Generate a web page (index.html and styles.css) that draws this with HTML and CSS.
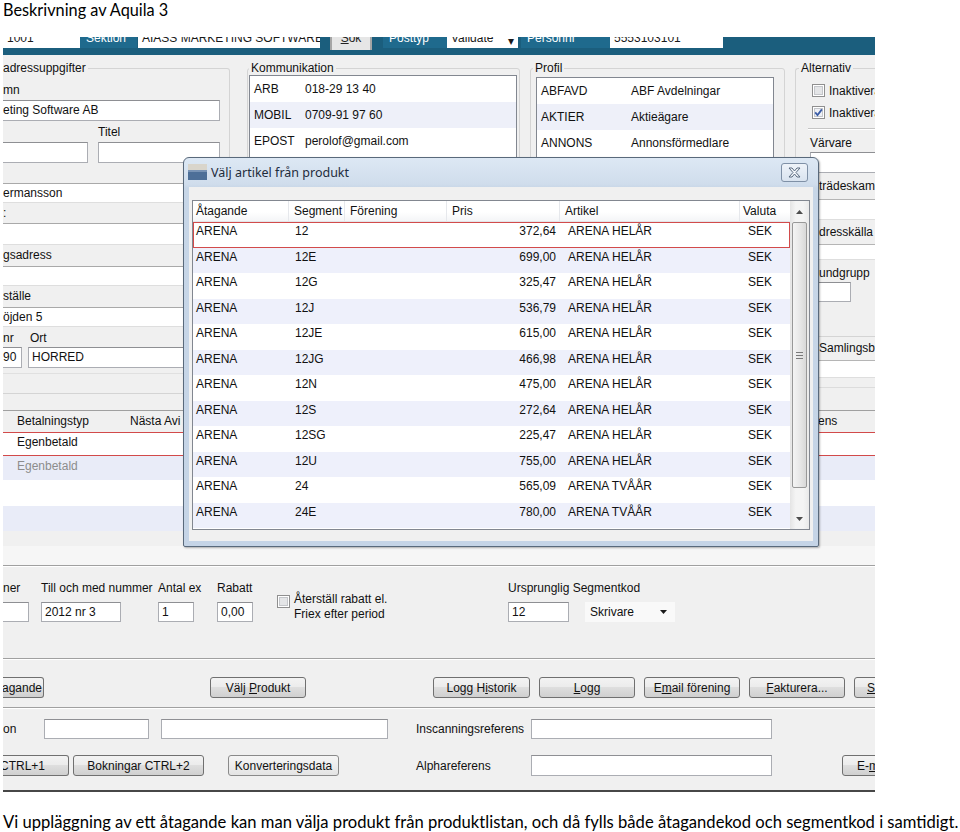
FILE: index.html
```html
<!DOCTYPE html>
<html lang="sv">
<head>
<meta charset="utf-8">
<title>Beskrivning av Aquila 3</title>
<link rel="stylesheet" href="styles.css">
</head>
<body>
<h1 class="doc-title">Beskrivning av Aquila 3</h1>

<div class="app">
  <div class="topbar">
    <div class="tb-field tb-f1"><span>1001</span></div>
    <div class="tb-label tb-l1"><span>Sektion</span></div>
    <div class="tb-field tb-f2"><span>AIASS MARKETING SOFTWARE</span></div>
    <div class="tb-btn"><span><u>S</u>ök</span></div>
    <div class="tb-label tb-l2"><span>Posttyp</span></div>
    <div class="tb-field tb-f3"><span>Validate</span><b class="tb-drop">&#9662;</b></div>
    <div class="tb-label tb-l3"><span>Personnr</span></div>
    <div class="tb-field tb-f4"><span>5553103101</span></div>
  </div>

  <div class="panel">
    <section class="sec-top">
      <div class="group g-left">
        <div class="legend">adressuppgifter</div>
        <div class="lbl lbl-name">mn</div>
        <div class="inp inp-name">eting Software AB</div>
        <div class="pair">
          <div class="pcol pcol-a"><div class="lbl lbl-pair"></div><div class="inp inp-a"></div></div>
          <div class="pcol"><div class="lbl lbl-pair">Titel</div><div class="inp inp-b"></div></div>
        </div>
        <div class="strip h20"></div>
        <div class="strip fld h20">ermansson</div>
        <div class="strip h20">:</div>
        <div class="strip fld h22"></div>
        <div class="strip h21">gsadress</div>
        <div class="strip fld h20"></div>
        <div class="strip h21">ställe</div>
        <div class="strip fld h20">öjden 5</div>
        <div class="pair pair-ort">
          <div class="pcol pcol-nr"><div class="lbl lbl-ort">nr</div><div class="inp inp-nr">90</div></div>
          <div class="pcol"><div class="lbl lbl-ort lbl-ort2">Ort</div><div class="inp inp-ort">HORRED</div></div>
        </div>
        <div class="faint"></div>
      </div>

      <div class="group g-komm">
        <div class="legend">Kommunikation</div>
        <div class="lb lb-komm">
          <div class="lb-row"><span class="k1">ARB</span><span>018-29 13 40</span></div>
          <div class="lb-row alt"><span class="k1">MOBIL</span><span>0709-91 97 60</span></div>
          <div class="lb-row"><span class="k1">EPOST</span><span>perolof@gmail.com</span></div>
        </div>
      </div>

      <div class="group g-prof">
        <div class="legend">Profil</div>
        <div class="lb lb-prof">
          <div class="lb-row"><span class="p1">ABFAVD</span><span>ABF Avdelningar</span></div>
          <div class="lb-row alt"><span class="p1">AKTIER</span><span>Aktieägare</span></div>
          <div class="lb-row"><span class="p1">ANNONS</span><span>Annonsförmedlare</span></div>
        </div>
      </div>

      <div class="col-right">
        <div class="group g-alt">
          <div class="legend">Alternativ</div>
          <div class="cb-row">
            <svg class="cb" width="13" height="13" viewBox="0 0 13 13"><rect x=".5" y=".5" width="12" height="12" fill="#fff" stroke="#8f8f8f"/><rect x="2.5" y="2.5" width="8" height="8" fill="#e4e5e7" stroke="#c4c6ca"/></svg>
            <span>Inaktivera</span>
          </div>
          <div class="cb-row">
            <svg class="cb" width="13" height="13" viewBox="0 0 13 13"><rect x=".5" y=".5" width="12" height="12" fill="#fff" stroke="#8f8f8f"/><rect x="2.5" y="2.5" width="8" height="8" fill="#eef0f5" stroke="#c4c6ca"/><path d="M3.2 6.4l2.3 2.6 4.4-5.6" fill="none" stroke="#3a5ca6" stroke-width="1.8"/></svg>
            <span>Inaktivera</span>
          </div>
          <div class="sep"></div>
          <div class="lbl lbl-varv">Värvare</div>
          <div class="inp inp-varv"></div>
          <div class="rs rs-lab h26">trädeskampanj</div>
          <div class="rs rs-fld h21"></div>
          <div class="rs rs-lab h24">dresskälla</div>
          <div class="rs rs-fld h16"></div>
          <div class="rs rs-lab rs-kund">undgrupp</div>
          <div class="inp rs-inp"></div>
          <div class="rs-space"></div>
        </div>
        <div class="rs rs-lab2">Samlingsbetalning</div>
        <div class="rs rs-fld h18"></div>
        <div class="rs rs-end"></div>
      </div>
    </section>

    <section class="sec-list">
      <div class="bl">
        <div class="bl-row bl-head"><span class="c1">Betalningstyp</span><span>Nästa Avi</span><span>ens</span></div>
        <div class="bl-row sel"><span class="c1">Egenbetald</span></div>
        <div class="bl-row alt dim"><span class="c1">Egenbetald</span></div>
        <div class="bl-row r3"></div>
        <div class="bl-row alt r4"></div>
      </div>
      <div class="bl-gap"></div>
      <div class="bl-light"></div>
    </section>

    <section class="sec-c">
      <div class="etch"></div>
      <div class="fields">
        <div class="fc fc1"><div class="lbl">ner</div><div class="inp in1"></div></div>
        <div class="fc fc2"><div class="lbl">Till och med nummer</div><div class="inp in2">2012 nr 3</div></div>
        <div class="fc fc3"><div class="lbl">Antal ex</div><div class="inp in3">1</div></div>
        <div class="fc fc4"><div class="lbl">Rabatt</div><div class="inp in4">0,00</div></div>
        <div class="fc fc5">
          <svg class="cb cb-reset" width="13" height="13" viewBox="0 0 13 13"><rect x=".5" y=".5" width="12" height="12" fill="#fff" stroke="#8f8f8f"/><rect x="2.5" y="2.5" width="8" height="8" fill="#e4e5e7" stroke="#c4c6ca"/></svg>
          <div class="reset-text">Återställ rabatt el.<br>Friex efter period</div>
        </div>
        <div class="fc fc6">
          <div class="lbl">Ursprunglig Segmentkod</div>
          <div class="seg-row">
            <div class="inp in6">12</div>
            <div class="combo"><span>Skrivare</span><svg class="combo-arrow" width="7" height="4" viewBox="0 0 7 4"><path d="M0 0h7L3.5 4z" fill="#1a1a1a"/></svg></div>
          </div>
        </div>
      </div>
    </section>

    <section class="sec-d">
      <div class="etch"></div>
      <div class="btnrow">
        <div class="btn b-cut b1"><span>agande</span></div>
        <div class="btn b2"><span>Välj <u>P</u>rodukt</span></div>
        <div class="btn b3"><span>Logg H<u>i</u>storik</span></div>
        <div class="btn b4"><span><u>L</u>ogg</span></div>
        <div class="btn b4"><span>E<u>m</u>ail förening</span></div>
        <div class="btn b4"><span><u>F</u>akturera...</span></div>
        <div class="btn b7"><span><u>S</u>kriv ut</span></div>
      </div>
    </section>

    <section class="sec-e">
      <div class="etch"></div>
      <div class="erow erow1">
        <div class="elbl el-on">on</div>
        <div class="inp ei1"></div>
        <div class="inp ei2"></div>
        <div class="elbl el-ref">Inscanningsreferens</div>
        <div class="inp ei3"></div>
      </div>
      <div class="erow erow2">
        <div class="btn b-cut e1"><span>CTRL+1</span></div>
        <div class="btn e2"><span>Bokningar CTRL+2</span></div>
        <div class="btn btn-flat e3"><span>Konverteringsdata</span></div>
        <div class="elbl el-alpha">Alphareferens</div>
        <div class="inp ei3 ei4"></div>
        <div class="btn e5"><span>E-<u>m</u>ail</span></div>
      </div>
    </section>
  </div>

  <div class="dlg">
    <div class="dlg-title">
      <svg class="dlg-icon" width="19" height="17" viewBox="0 0 19 17"><rect x="0" y="0" width="19" height="6" fill="#d9d5cb"/><rect x="0" y="6" width="19" height="10" fill="#4d6f98"/><rect x="0" y="6" width="19" height="2" fill="#7893b5"/></svg>
      <span class="dlg-caption">Välj artikel från produkt</span>
      <div class="dlg-close"><svg width="13" height="11" viewBox="0 0 13 11"><path d="M1 1h3l2.5 3 2.5-3h3l-4 4.5 4 4.5h-3l-2.5-3-2.5 3h-3l4-4.5z" fill="#f4f7fb" stroke="#5a6b80" stroke-width="1" stroke-linejoin="round"/></svg></div>
    </div>
    <div class="dlg-client">
      <div class="lv">
        <div class="lv-main">
          <div class="lv-head"><span>Åtagande</span><span>Segment</span><span>Förening</span><span>Pris</span><span>Artikel</span><span>Valuta</span></div>
          <div class="lv-row sel"><span>ARENA</span><span>12</span><span></span><span>372,64</span><span>ARENA HELÅR</span><span>SEK</span></div>
          <div class="lv-row"><span>ARENA</span><span>12E</span><span></span><span>699,00</span><span>ARENA HELÅR</span><span>SEK</span></div>
          <div class="lv-row"><span>ARENA</span><span>12G</span><span></span><span>325,47</span><span>ARENA HELÅR</span><span>SEK</span></div>
          <div class="lv-row"><span>ARENA</span><span>12J</span><span></span><span>536,79</span><span>ARENA HELÅR</span><span>SEK</span></div>
          <div class="lv-row"><span>ARENA</span><span>12JE</span><span></span><span>615,00</span><span>ARENA HELÅR</span><span>SEK</span></div>
          <div class="lv-row"><span>ARENA</span><span>12JG</span><span></span><span>466,98</span><span>ARENA HELÅR</span><span>SEK</span></div>
          <div class="lv-row"><span>ARENA</span><span>12N</span><span></span><span>475,00</span><span>ARENA HELÅR</span><span>SEK</span></div>
          <div class="lv-row"><span>ARENA</span><span>12S</span><span></span><span>272,64</span><span>ARENA HELÅR</span><span>SEK</span></div>
          <div class="lv-row"><span>ARENA</span><span>12SG</span><span></span><span>225,47</span><span>ARENA HELÅR</span><span>SEK</span></div>
          <div class="lv-row"><span>ARENA</span><span>12U</span><span></span><span>755,00</span><span>ARENA HELÅR</span><span>SEK</span></div>
          <div class="lv-row"><span>ARENA</span><span>24</span><span></span><span>565,09</span><span>ARENA TVÅÅR</span><span>SEK</span></div>
          <div class="lv-row"><span>ARENA</span><span>24E</span><span></span><span>780,00</span><span>ARENA TVÅÅR</span><span>SEK</span></div>
        </div>
        <div class="sb">
          <div class="sb-btn"><svg width="7" height="4" viewBox="0 0 7 4"><path d="M0 4L3.5 0 7 4z" fill="#4d4d4d"/></svg></div>
          <div class="sb-thumb"><svg width="7" height="7" viewBox="0 0 7 7"><path d="M0 .5h7M0 3.5h7M0 6.5h7" stroke="#7a7a7a" stroke-width="1"/></svg></div>
          <div class="sb-track"></div>
          <div class="sb-btn"><svg width="7" height="4" viewBox="0 0 7 4"><path d="M0 0h7L3.5 4z" fill="#4d4d4d"/></svg></div>
        </div>
      </div>
    </div>
  </div>
</div>

<p class="caption">Vi uppläggning av ett åtagande kan man välja produkt från produktlistan, och då fylls både åtagandekod och segmentkod i samtidigt.</p>
</body>
</html>
```

FILE: styles.css
```css
* { box-sizing: border-box; }
html, body { margin: 0; padding: 0; }
body {
  background: #fff;
  width: 960px;
  height: 832px;
  overflow: hidden;
  font-family: "Liberation Sans", Arial, sans-serif;
}

.doc-title {
  margin: 0;
  padding: 0 0 0 3px;
  height: 20px;
  font: 400 16.3px/20px Lato, "Open Sans", sans-serif;
  color: #000;
}
.caption {
  margin: 20px 0 0 3px;
  font: 400 16.6px/20px Lato, "Open Sans", sans-serif;
  white-space: nowrap;
  color: #000;
}

.app {
  position: relative;
  margin: 17px 0 0 3px;
  width: 872px;
  height: 755px;
  overflow: hidden;
  font-size: 12px;
  line-height: 14px;
  color: #111;
}
u { text-decoration: underline; }

/* ---------- top bar ---------- */
.topbar {
  display: flex;
  align-items: flex-start;
  height: 18px;
  background: #1b5e7d;
}
.tb-field, .tb-label, .tb-btn {
  flex: none;
  height: 11px;
  display: flex;
  align-items: flex-end;
  overflow: hidden;
  white-space: nowrap;
}
.tb-field span, .tb-label span, .tb-btn span { line-height: 20px; }
.tb-field { background: #fff; color: #1a1a1a; padding-left: 4px; }
.tb-label { background: #1f6a8d; color: #fff; padding-left: 6px; }
.tb-btn {
  width: 42px;
  height: 13px;
  margin-left: 10px;
  justify-content: center;
  background: #e6e6e6;
  border-left: 2px solid #a5a5a5;
  border-right: 2px solid #a5a5a5;
  color: #222;
}
.tb-btn span { line-height: 24px; }
.tb-f1 { width: 77px; }
.tb-l1 { width: 57px; }
.tb-f2 { width: 182px; margin-left: 1px; }
.tb-l2 { width: 64px; margin-left: 11px; }
.tb-f3 { width: 71px; }
.tb-drop { margin-left: auto; margin-right: 4px; font-weight: 400; line-height: 14px; }
.tb-l3 { width: 89px; margin-left: 3px; }
.tb-f4 { width: 113px; }

/* ---------- panel ---------- */
.panel {
  height: 737px;
  background: #f0f0f0;
  border-bottom: 2px solid #474747;
}

.sec-top {
  height: 350px;
  display: flex;
  align-items: flex-start;
  padding-top: 13px;
}
.group {
  flex: none;
  border: 1px solid #d4d4d4;
  border-radius: 3px;
}
.legend {
  width: max-content;
  height: 14px;
  line-height: 14px;
  margin-top: -8px;
  padding: 0 2px;
  background: #f0f0f0;
  white-space: nowrap;
}

.lbl { height: 16px; line-height: 16px; white-space: nowrap; }
.inp {
  height: 21px;
  line-height: 19px;
  background: #fff;
  border: 1px solid #abadb3;
  border-top-color: #8e8f93;
  padding-left: 3px;
  white-space: nowrap;
  overflow: hidden;
  flex: none;
}

/* left address group */
.g-left {
  width: 227px;
  height: 326px;
  border-left: 0;
  border-radius: 0 3px 3px 0;
}
.g-left .legend { padding-left: 0; }
.lbl-name { margin-top: 7px; }
.inp-name { width: 217px; margin-top: 2px; border-left: 0; padding-left: 0; }
.pair { display: flex; }
.pcol { flex: none; }
.pcol-a { width: 95px; }
.lbl-pair { margin-top: 3px; }
.pair .inp { margin-top: 2px; }
.inp-a { width: 85px; border-left: 0; }
.inp-b { width: 122px; }

.strip { white-space: nowrap; overflow: hidden; }
.h16 { height: 16px; }
.h18 { height: 18px; }
.h20 { height: 20px; line-height: 20px; }
.h21 { height: 21px; line-height: 21px; }
.h22 { height: 22px; line-height: 22px; }
.h24 { height: 24px; line-height: 24px; }
.h26 { height: 26px; line-height: 26px; }
.strip.fld {
  background: #fff;
  border-top: 1px solid #a9a9a9;
  border-bottom: 1px solid #dedede;
  line-height: 18px;
}
.pcol-nr { width: 25px; }
.lbl-ort { height: 20px; line-height: 18px; padding-top: 2px; }
.lbl-ort2 { padding-left: 2px; }
.pair-ort .inp { margin-top: 0; }
.inp-nr { width: 19px; border-left: 0; padding-left: 0; }
.inp-ort { width: 200px; }
.faint { height: 1px; margin-top: 5px; background: #e0e0e0; }

/* Kommunikation / Profil */
.g-komm { width: 273px; height: 260px; margin-left: 17px; }
.g-komm .legend { margin-left: 1px; }
.g-prof { width: 255px; height: 260px; margin-left: 10px; }
.g-prof .legend { margin-left: 2px; }
.lb { background: #fff; border: 1px solid #828790; height: 150px; }
.lb-komm { width: 268px; margin-left: 1px; }
.lb-prof { width: 238px; margin: 2px 0 0 5px; }
.lb-row {
  display: flex;
  align-items: center;
  height: 26px;
  padding-left: 4px;
  white-space: nowrap;
}
.lb-row.alt { background: #eef0f9; }
.k1 { width: 51px; flex: none; }
.p1 { width: 90px; flex: none; }

/* right column */
.col-right { width: 80px; margin-left: 10px; flex: none; }
.g-alt { border-right: 0; border-radius: 3px 0 0 3px; }
.g-alt .legend { margin-left: 3px; }
.cb { display: block; flex: none; }
.cb-row {
  display: flex;
  align-items: center;
  gap: 4px;
  height: 13px;
  margin-top: 9px;
  padding-left: 16px;
  white-space: nowrap;
}
.sep {
  height: 2px;
  margin: 9px 0 0 12px;
  border-top: 1px solid #c5c5c5;
  border-bottom: 1px solid #fff;
}
.lbl-varv { margin-top: 5px; padding-left: 14px; }
.inp-varv { margin: 1px 0 0 14px; border-right: 0; }
.rs { padding-left: 23px; white-space: nowrap; overflow: hidden; }
.rs-fld { background: #fff; border-top: 1px solid #b5b5b5; border-bottom: 1px solid #dedede; }
.rs-kund { height: 22px; line-height: 26px; }
.rs-inp { width: 33px; height: 20px; margin-left: 22px; }
.rs-space { height: 34px; }
.rs-lab2 { height: 23px; line-height: 23px; padding-left: 24px; }
.rs-end { height: 27px; border-top: 9px solid #f0f0f0; box-shadow: inset 0 1px 0 #dcdcdc; }

/* ---------- list section ---------- */
.sec-list { height: 160px; padding-top: 5px; }
.bl { border-top: 1px solid #a0a0a0; }
.bl-row {
  display: grid;
  grid-template-columns: 127px 688px 57px;
  height: 24px;
  line-height: 20px;
  background: #fff;
  white-space: nowrap;
}
.bl-row .c1 { padding-left: 14px; }
.bl-head { height: 21px; line-height: 21px; background: #f0f0f0; }
.bl-row.sel { border-top: 1px solid #d24a4a; border-bottom: 1px solid #d24a4a; line-height: 18px; }
.bl-row.alt { background: #e9ecf8; }
.bl-row.dim { color: #8c8c8c; }
.bl-row.r3 { height: 26px; }
.bl-row.r4 { height: 25px; }
.bl-gap { height: 15px; }
.bl-light { height: 19px; background: #f6f6f6; }

/* ---------- fields section ---------- */
.etch { height: 2px; border-top: 1px solid #a0a0a0; border-bottom: 1px solid #fff; }
.sec-c { height: 93px; }
.fields { display: flex; align-items: flex-start; margin-top: 13px; }
.fc { flex: none; }
.fc .inp { height: 20px; line-height: 18px; margin-top: 6px; }
.fc1 { width: 38px; }
.fc2 { width: 117px; }
.fc3 { width: 59px; }
.fc4 { width: 60px; }
.fc5 { width: 231px; display: flex; align-items: flex-start; }
.in1 { width: 26px; border-left: 0; }
.in2 { width: 80px; }
.in3 { width: 36px; }
.in4 { width: 36px; }
.cb-reset { margin-top: 15px; }
.reset-text { margin: 12px 0 0 4px; line-height: 15px; white-space: nowrap; }
.seg-row { display: flex; align-items: flex-start; }
.in6 { width: 61px; }
.combo {
  width: 90px;
  height: 20px;
  margin: 6px 0 0 16px;
  padding-left: 5px;
  line-height: 20px;
  background: #f9f9f9;
  display: flex;
  align-items: center;
}
.combo-arrow { margin-left: auto; margin-right: 8px; }

/* ---------- buttons ---------- */
.sec-d { height: 49px; }
.btnrow { display: flex; margin-top: 17px; }
.btn {
  flex: none;
  height: 21px;
  border: 1px solid #707070;
  border-radius: 3px;
  background: linear-gradient(#f3f3f3 0, #ececec 45%, #dedede 50%, #d0d0d0 100%);
  display: flex;
  align-items: center;
  justify-content: center;
  white-space: nowrap;
  overflow: hidden;
  color: #111;
}
.b-cut { border-left: 0; border-radius: 0 3px 3px 0; }
.b1 { width: 41px; justify-content: flex-end; padding-right: 1px; }
.b2 { width: 96px; margin-left: 166px; }
.b3 { width: 97px; margin-left: 127px; }
.b4 { width: 96px; margin-left: 9px; }
.b7 { width: 40px; margin-left: 9px; justify-content: flex-start; padding-left: 12px; }

.sec-e { height: 83px; }
.erow { display: flex; align-items: center; }
.erow1 { margin-top: 10px; height: 20px; }
.erow2 { margin-top: 16px; height: 21px; }
.elbl { flex: none; white-space: nowrap; }
.el-on { width: 41px; }
.erow .inp { height: 20px; }
.ei1 { width: 105px; }
.ei2 { width: 227px; margin-left: 12px; }
.el-ref { width: 115px; margin-left: 28px; }
.ei3 { width: 241px; }
.erow .ei4 { height: 21px; }
.e1 { width: 66px; justify-content: flex-start; padding-left: 0; }
.e1 span { margin-left: -3px; }
.e2 { width: 131px; margin-left: 4px; }
.e3 { width: 111px; margin-left: 24px; }
.btn-flat { background: linear-gradient(#f6f6f6, #e4e4e4); border-color: #8a8a8a; }
.el-alpha { width: 115px; margin-left: 77px; }
.e5 { width: 40px; margin-left: 70px; justify-content: flex-start; padding-left: 14px; }

/* ---------- dialog ---------- */
.dlg {
  position: absolute;
  left: 180px;
  top: 120px;
  width: 636px;
  height: 390px;
  border: 1px solid #59697b;
  border-radius: 6px 6px 2px 2px;
  background: linear-gradient(#dde8f4 0, #d0ddec 26px, #c7d6e7 30px, #c5d4e6 100%);
  padding: 0 5px 5px;
  box-shadow: 1px 1px 2px rgba(0, 0, 0, .3);
  display: flex;
  flex-direction: column;
}
.dlg-title { height: 29px; flex: none; display: flex; align-items: center; }
.dlg-icon { display: block; margin-left: -1px; flex: none; }
.dlg-caption {
  margin-left: 4px;
  font: 12.5px/16px "Noto Sans", "Open Sans", sans-serif;
  color: #1e2c3c;
  white-space: nowrap;
}
.dlg-close {
  margin: 5px 5px 0 auto;
  width: 27px;
  height: 19px;
  align-self: flex-start;
  border: 1px solid #7f90a6;
  border-radius: 3px;
  background: linear-gradient(#eef3f9, #d9e3ef);
  display: flex;
  align-items: center;
  justify-content: center;
}
.dlg-close svg { display: block; }
.dlg-client {
  flex: 1;
  background: #f0f0f0;
  padding: 13px 2px 0 3px;
}
.lv {
  width: 618px;
  height: 330px;
  border: 1px solid #828790;
  background: #fff;
  display: flex;
}
.lv-main { width: 597px; flex: none; }
.lv-head, .lv-row {
  display: grid;
  grid-template-columns: 96px 56px 102px 113px 180px 50px;
  white-space: nowrap;
}
.lv-head {
  height: 21px;
  line-height: 20px;
  background: linear-gradient(#fff 0, #fff 55%, #f4f5f7 100%);
  border-bottom: 1px solid #e2e5e9;
}
.lv-head span { border-right: 1px solid #e6e8ec; padding-left: 5px; overflow: hidden; }
.lv-head span:first-child { padding-left: 3px; }
.lv-head span:nth-child(6) { padding-left: 3px; border-right: 0; }
.lv-row { height: 25.5px; line-height: 18px; }
.lv-row:nth-child(odd) { background: #eef0fb; }
.lv-row.sel { box-shadow: inset 0 0 0 1px #d24b4b; }
.lv-row span { overflow: hidden; }
.lv-row span:nth-child(1) { padding-left: 3px; }
.lv-row span:nth-child(2) { padding-left: 6px; }
.lv-row span:nth-child(4) { text-align: right; padding-right: 4px; }
.lv-row span:nth-child(5) { padding-left: 8px; }
.lv-row span:nth-child(6) { padding-left: 8px; }

.sb {
  width: 19px;
  flex: none;
  display: flex;
  flex-direction: column;
  background: linear-gradient(90deg, #e4e4e4, #f4f4f4 30%, #f4f4f4 70%, #e9e9e9);
}
.sb-btn { height: 21px; flex: none; display: flex; align-items: center; justify-content: center; }
.sb-btn svg, .sb-thumb svg { display: block; }
.sb-thumb {
  height: 266px;
  flex: none;
  margin: 0 2px;
  border: 1px solid #989898;
  border-radius: 2px;
  background: linear-gradient(90deg, #f4f4f4, #e8e8e8 50%, #d8d8d8);
  display: flex;
  align-items: center;
  justify-content: center;
}
.sb-track { flex: 1; }
```
